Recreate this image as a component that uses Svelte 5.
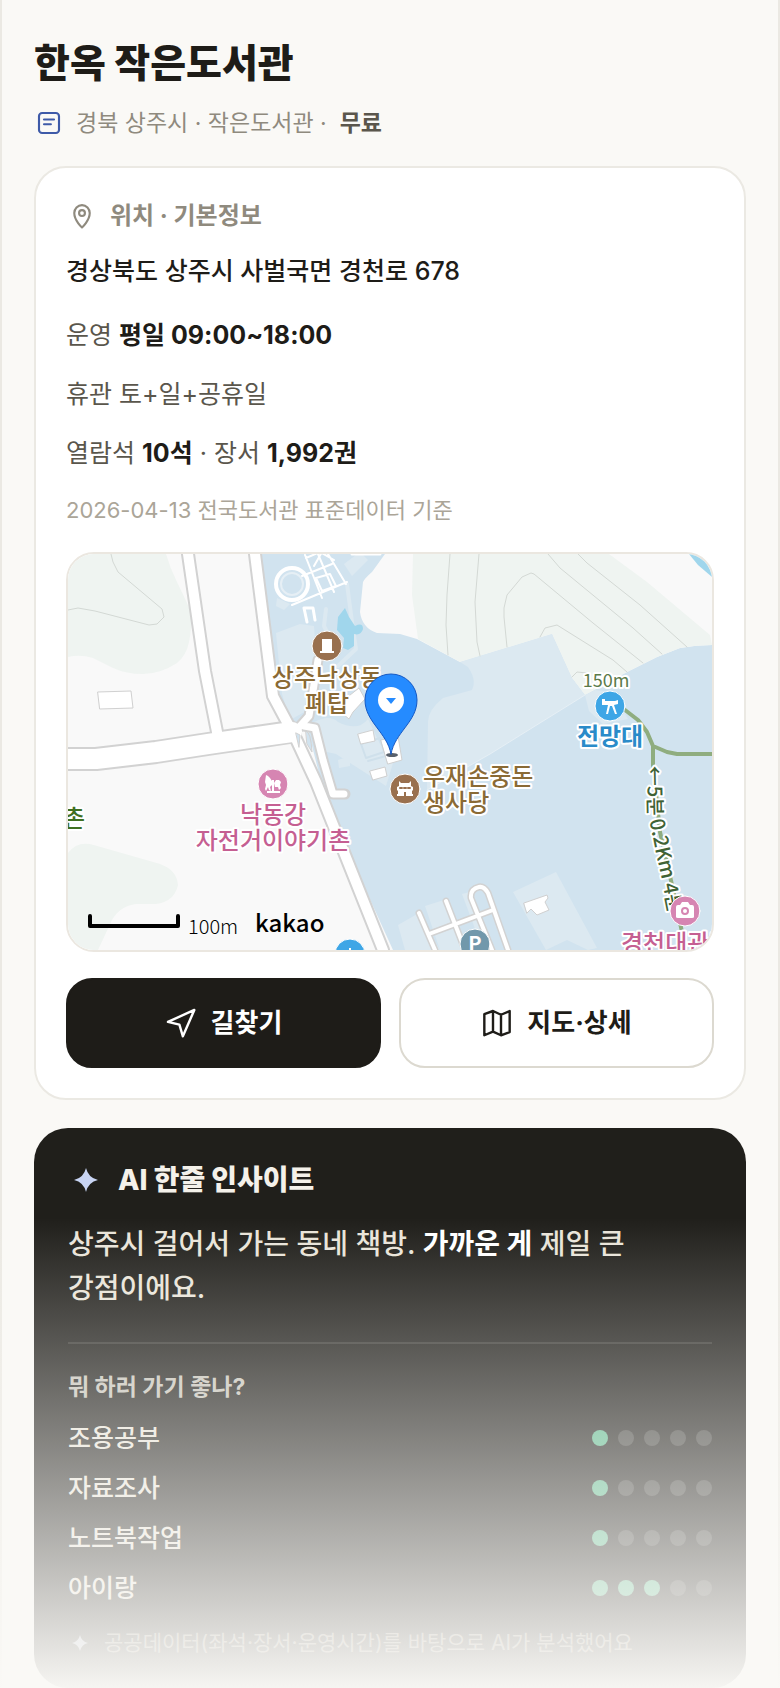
<script lang="ts">
    type Place = {
        x: number;
        y: number;
        color: string;
        lines: string[];
        anchor?: "start" | "middle" | "end";
        bold?: boolean;
    };

    const purposes = [
        { label: "조용공부", score: 1 },
        { label: "자료조사", score: 1 },
        { label: "노트북작업", score: 1 },
        { label: "아이랑", score: 3 },
    ];
    const steps = [1, 2, 3, 4, 5];

    const places: Place[] = [
        { x: 259, y: 132, color: "#8a6a35", lines: ["상주낙상동", "폐탑"] },
        { x: 205, y: 269, color: "#c55f92", lines: ["낙동강", "자전거이야기촌"] },
        { x: 355, y: 231, color: "#8a6a35", lines: ["우재손중돈", "생사당"], anchor: "start" },
        { x: 542, y: 191, color: "#2a8bc9", lines: ["전망대"], bold: true },
        { x: 553, y: 398, color: "#c55f92", lines: ["경천대관광지"], anchor: "start" },
        { x: 17, y: 273, color: "#3f6f1f", lines: ["촌"], anchor: "end" },
    ];

    const contours = [
        "M43 0L45 8L50 18L94 55L96 63L89 70L81 71L27 57L10 54L0 56",
        "M382 0L379 41L378 71L380 101",
        "M411 0L407 48L409 88L412 102",
        "M439 93L436 63L436 54L439 41L454 23L463 19L466 20L525 69L575 109",
        "M480 0L492 14L565 74L594 100",
        "M510 0L519 9L572 51L619 93",
        "M472 83L477 74L489 71L545 106L559 118",
        "M504 123L509 118L519 119",
    ];
</script>

{#snippet sparkle()}
    <path d="M12 4Q13.5 10.5 20 12Q13.5 13.5 12 20Q10.5 13.5 4 12Q10.5 10.5 12 4Z" fill="currentColor" />
{/snippet}

<main class="shell">
    <header>
        <h1>한옥 작은도서관</h1>
        <p class="sub">
            <svg class="kind" viewBox="0 0 24 24" aria-hidden="true">
                <rect x="4" y="4" width="16" height="16" rx="2.5" />
                <path d="M8 9.2h8M8 13h5.5" />
            </svg>
            <span>경북 상주시 · 작은도서관 ·&nbsp; <b>무료</b></span>
        </p>
    </header>

    <section class="card">
        <h2>
            <svg viewBox="0 0 24 24" aria-hidden="true">
                <path d="M12 20.6C12 20.6 6.2 15.4 6.2 9.8a5.8 6 0 0 1 11.6 0C17.8 15.4 12 20.6 12 20.6z" />
                <circle cx="12" cy="9.8" r="2.2" />
            </svg>
            위치 · 기본정보
        </h2>
        <p class="address">경상북도 상주시 사벌국면 경천로 678</p>
        <div class="facts">
            <p>운영 <b>평일 09:00~18:00</b></p>
            <p>휴관 토+일+공휴일</p>
            <p>열람석 <b>10석</b> · 장서 <b>1,992권</b></p>
            <p class="basis">2026-04-13 전국도서관 표준데이터 기준</p>
        </div>

        <div class="map">
            <svg viewBox="0 0 644 396" preserveAspectRatio="xMidYMid slice" role="img" aria-label="지도">
                <rect width="644" height="396" fill="#f9f9f9" />
                <path d="M0 0H98Q102 14 109 28T123 58Q124 74 121 88Q118 102 109 109Q92 120 75 120Q58 120 45 114L25 104Q12 100 0 103Z" fill="#eff4f1" />
                <path d="M0 299Q8 288 22 290L92 310Q109 316 110 331Q106 348 88 350H68Q52 352 44 366L30 396H0Z" fill="#eff4f1" />

                <!-- river, then the hill on its far bank -->
                <path d="M190 0H317L304 18Q297 24 295 28L292 58Q294 74 309 79L332 80L349 85L392 108L484 80L504 124L517 141L559 118L589 103L612 94Q628 91 644 91V396H325L259 251L240 176L210 160Z" fill="#d1e3ef" />
                <path d="M345 0H541L579 28L642 81L644 91Q628 91 612 94L589 103L559 118L517 141L504 124L484 80L392 108L350 85L344 41Z" fill="#eff4f1" />
                <path d="M621 0L630 11L644 23V0Z" fill="#a0d6ec" />
                <path d="M392 108L484 80L504 124L517 141L422 200L359 236L360 168Q360 156 375 144L404 136Q409 126 400 113Z" fill="#dce9f1" />
                <path d="M517 141L422 200L359 236" fill="none" stroke="#e6eff5" />
                <path d="M517 141L521 157L535 170L560 165L544 138L527 136Z" fill="#dce9f1" />
                <path d="M208 79L232 70L246 72L248 100L240 156L222 166L214 140Z" fill="#dce9f1" />
                <path d="M258 55L256 72L262 84L256 98M279 30L284 68L288 95L270 112" fill="none" stroke="#dce9f1" stroke-width="4" />
                <path d="M246 168Q262 160 270 168Q290 178 300 165L312 190L326 206L318 232L268 200L250 196Z" fill="#dce9f1" />
                <path d="M209 44L222 50L216 56L208 52ZM276 10L292 -2L300 6L284 22ZM270 206L282 202V212L271 214Z" fill="#dce9f1" />
                <path d="M293 190L312 184L316 198L298 204ZM300 207L318 202" fill="none" stroke="#cfe0eb" stroke-width="2" />
                <path d="M277 54L281 63L287 72Q295 68 295 75Q293 82 286 80V92L280 96L275 94L276 84L269 76L270 63Z" fill="#a0d6ec" />
                <path d="M330 371L351 359L372 396H337ZM357 352L376 346L397 396H372ZM394 340L402 338L425 390L415 396ZM445 338L488 318L529 394L520 396L499 386L478 396Z" fill="#dce9f1" />

                {#each contours as d}
                    <path {d} fill="none" stroke="#d3d8d4" />
                {/each}

                <g fill="#fff" stroke="#d0d0d0">
                    <path d="M30 138L63 137L65 154L32 155Z" />
                    <path d="M456 349L479 341L480 344L477 348L481 356L469 361L463 355L459 359Z" />
                    <path d="M290 180L305 176L307 187L293 190ZM302 217L317 213L319 222L305 226ZM277 145L291 134L297 145L285 158L281 165L275 160Z" />
                    <path d="M313 186L330 182L334 206L320 210Z" />
                </g>

                <g fill="none" stroke="#d2d2d2">
                    <g stroke-width="14">
                        <path d="M120 0L137 117L151 188" />
                        <path d="M187 0L205 142L228 185L248 228L315 396" />
                    </g>
                    <path d="M-4 205H28L88 198L140 190L222 178" stroke-width="24" />
                    <path d="M250 106L241 162L225 180M236 172L247 174L255 206L265 240L277 240" stroke-width="11" />
                </g>
                <g fill="none" stroke="#fff">
                    <g stroke-width="10">
                        <path d="M120 0L137 117L151 188" />
                        <path d="M187 0L205 142L228 185L248 228L315 396" />
                    </g>
                    <path d="M-4 205H28L88 198L140 190L224 178" stroke-width="20" />
                    <path d="M250 106L241 162L225 180M236 172L247 174L255 206L265 240L276 240" stroke-width="7" />
                </g>
                <path d="M228 179L232 181L231 193ZM238 177Q243 178 244 198L239 190Z" fill="#d1e3ef" stroke="#d2d2d2" />
                <path d="M351 359L367 396M378 347L397 396M361 380L425 356M440 396L420 339Q416 332 411 333Q402 335 403 344L424 396" fill="none" stroke="#d2d2d2" stroke-width="7" />
                <path d="M351 359L367 396M378 347L397 396M361 380L425 356M440 396L420 339Q416 332 411 333Q402 335 403 344L424 396" fill="none" stroke="#fff" stroke-width="4" />

                <!-- amphitheatre and paths of the park -->
                <g fill="none" stroke="#fff" stroke-width="2">
                    <circle cx="224" cy="30" r="16" stroke-width="4" />
                    <circle cx="224" cy="30" r="11" stroke="#e6eff5" />
                    <path d="M224 51L279 28M234 22L264 10M237 1L254 44M250 0L266 38M260 0L278 30M238 4L252 -2L266 6M246 12L254 -2M248 24L262 20L268 32L254 37Z" />
                    <path d="M239 68L236 54H245L247 66M284 0H312" stroke-width="3" />
                </g>

                <path d="M557 156L570 166L579 178L585 192L599 198L609 200H644M585 192V211L592 278L604 331L614 378" fill="none" stroke="#8fad7f" stroke-width="4" />

                <path id="trail" d="M579 212L580 258L587 294L595 331L607 392" fill="none" />
                <text class="halo" font-size="20" font-weight="500" fill="#3f6235">
                    <textPath href="#trail">←5분 0.2Km 4분</textPath>
                </text>

                <g stroke="#fff" stroke-width="1">
                    <circle cx="259" cy="92" r="15" fill="#99704e" />
                    <circle cx="337" cy="235" r="15" fill="#99704e" />
                    <circle cx="542" cy="152" r="15" fill="#3ea6e6" />
                    <circle cx="282" cy="400" r="15" fill="#3ea6e6" />
                    <circle cx="205" cy="230" r="15" fill="#d685b2" />
                    <circle cx="617" cy="357" r="15" fill="#d685b2" />
                    <circle cx="407" cy="390" r="15" fill="#7198ab" />
                </g>
                <g fill="#fff">
                    <path d="M254 85H264V97H266V99H252V97H254Z" />
                    <path d="M331 227L333 229H341L343 227V232L345 233V236L344 237V240H345V242H329V240H330V237L329 236V233L331 232Z" />
                    <path d="M534 145H537V147H547L550 146V150L546 151L549 160H547L544 152H542L540 160H538L540 151H534Z" />
                    <path d="M198 221L200 222L202 224L204 227V231L202 233L203 237L201 236L200 233L198 237L197 235L198 231L197 228ZM206 229L208 226H211L213 228L212 231L213 234L211 236L210 233L207 233ZM204 226H206V237H212V239H199V237H204Z" />
                    <path d="M608 353Q608 351 610 351H612L614 348H620L622 351H624Q626 351 626 353V363Q626 364 624 364H610Q608 364 608 363Z" />
                    <path d="M281 394H283V396H281Z" />
                </g>
                <path d="M332 234h2m2 0h2m2 0h2" stroke="#99704e" stroke-width="2" />
                <path d="M336 242V238H338V242" fill="#99704e" />
                <circle cx="617" cy="357" r="3" fill="none" stroke="#d685b2" stroke-width="2" />
                <text x="407" y="397" font-size="20" font-weight="700" fill="#fff" text-anchor="middle">P</text>

                {#each places as place}
                    <g class="halo" font-size="24" font-weight={place.bold ? 700 : 500} fill={place.color} text-anchor={place.anchor ?? "middle"}>
                        {#each place.lines as line, i}
                            <text x={place.x} y={place.y + i * 26}>{line}</text>
                        {/each}
                    </g>
                {/each}
                <text class="halo" x="538" y="133" font-size="18" fill="#5b7a4a" text-anchor="middle">150m</text>

                <ellipse cx="324" cy="201" rx="6" ry="2" fill="#59616b" />
                <path d="M323 200C319 178 297 168 297 146A26 26 0 0 1 349 146C349 168 327 178 323 200Z" fill="#258bff" stroke="#1559c4" />
                <circle cx="323" cy="146" r="13" fill="#fff" />
                <path d="M318 144H328L323 150Z" fill="#258bff" />

                <path d="M22 362V372H110V362" fill="none" stroke="#000" stroke-width="4" />
                <text x="120" y="380" font-size="20" font-weight="300">100m</text>
                <text x="187" y="378" font-size="24" font-weight="500">kakao</text>
            </svg>
        </div>

        <div class="actions">
            <button type="button" class="primary">
                <svg viewBox="0 0 24 24" aria-hidden="true"><path d="M2.2 11.2L22 2.2L13.4 22L10.8 13.2Z" /></svg>
                길찾기
            </button>
            <button type="button">
                <svg viewBox="0 0 24 24" aria-hidden="true"><path d="M2.5 5.3L9 3l6 2.8L21.5 3v15.8L15 21.2L9 18.5L2.5 21.2zM9 3v15.5M15 5.8v15.4" /></svg>
                지도·상세
            </button>
        </div>
    </section>

    <section class="insight">
        <h2>
            <svg viewBox="0 0 24 24" aria-hidden="true">{@render sparkle()}</svg>
            AI 한줄 인사이트
        </h2>
        <p class="summary">상주시 걸어서 가는 동네 책방. <b>가까운 게</b> 제일 큰 강점이에요.</p>
        <h3>뭐 하러 가기 좋나?</h3>
        <ul>
            {#each purposes as p}
                <li>
                    {p.label}
                    <span class="dots" role="img" aria-label="5점 중 {p.score}점">
                        {#each steps as n}<i class:on={n <= p.score}></i>{/each}
                    </span>
                </li>
            {/each}
        </ul>
        <p class="source">
            <svg viewBox="0 0 24 24" aria-hidden="true">{@render sparkle()}</svg>
            공공데이터(좌석·장서·운영시간)를 바탕으로 AI가 분석했어요
        </p>
    </section>

    <div class="fade"></div>
</main>

<style>
    :global(body) {
        background: #faf9f6;
    }

    .shell {
        position: relative;
        box-sizing: border-box;
        padding: 39px 32px 0;
        border: solid #ebe9e3;
        border-width: 0 2px;
        background: #faf9f6;
        color: #1e1c18;
        font-family: Inter, "Noto Sans CJK KR", sans-serif;
        font-weight: 500;
        line-height: 36px;
        word-break: keep-all;
    }

    h1, h2, h3, p, ul {
        margin: 0;
        padding: 0;
    }

    svg {
        flex: none;
        fill: none;
        stroke: currentColor;
        stroke-width: 2;
        stroke-linecap: round;
        stroke-linejoin: round;
    }

    h1 {
        font-size: 39px;
        line-height: 48px;
        font-weight: 800;
    }

    .sub {
        display: flex;
        align-items: center;
        gap: 12px;
        margin: 18px 0 25px;
        font-size: 23px;
        font-weight: 400;
        color: #8f8a7e;
    }

    .sub b {
        color: #5a564c;
        font-weight: 700;
    }

    .kind {
        width: 30px;
        height: 30px;
        color: #3e5aa8;
        stroke-width: 1.7;
    }

    .card {
        padding: 30px 30px 30px;
        border: 2px solid #ebe9e3;
        border-radius: 32px;
        background: #fff;
    }

    h2 {
        display: flex;
        align-items: center;
        font-weight: 700;
    }

    .card h2 {
        gap: 12px;
        margin-bottom: 19px;
        font-size: 24px;
        color: #8f8a7e;
    }

    .card h2 svg {
        width: 32px;
        height: 32px;
        stroke-width: 1.6;
    }

    .address {
        margin-bottom: 28px;
        font-size: 25px;
    }

    .facts {
        display: grid;
        gap: 23px;
        margin-bottom: 26px;
        font-size: 25px;
        font-weight: 400;
        color: #5a564c;
    }

    .facts b {
        color: #1e1c18;
        font-weight: 700;
    }

    .facts .basis {
        font-size: 22px;
        line-height: 32px;
        color: #aba598;
    }

    .map {
        overflow: hidden;
        border: 2px solid #ebe7e0;
        border-radius: 28px;
    }

    .map svg {
        display: block;
        width: 100%;
        fill: #000;
        stroke: none;
        stroke-width: 1;
    }

    .map text {
        font-family: "Noto Sans CJK KR", sans-serif;
    }

    .map text:not([font-weight]):not(g > text) {
        font-weight: 400;
    }

    .halo {
        paint-order: stroke;
        stroke: #fff;
        stroke-width: 4px;
    }

    .actions {
        display: grid;
        grid-template-columns: 1fr 1fr;
        gap: 18px;
        margin-top: 26px;
    }

    button {
        display: flex;
        align-items: center;
        justify-content: center;
        gap: 14px;
        height: 90px;
        border: 2px solid #dcd9d0;
        border-radius: 26px;
        background: #fff;
        color: #1e1c18;
        font: inherit;
        font-size: 26px;
        font-weight: 700;
        cursor: pointer;
    }

    button svg {
        width: 32px;
        height: 32px;
        stroke-width: 1.8;
    }

    button.primary {
        border-color: #1e1c18;
        background: #1e1c18;
        color: #fff;
    }

    .insight {
        margin-top: 28px;
        padding: 34px 34px 29px;
        border-radius: 34px;
        background: #201f1b;
        color: #e9e4d9;
    }

    .insight h2 {
        gap: 14px;
        font-size: 28px;
        font-weight: 800;
        color: #f4f1ea;
    }

    .insight svg {
        stroke: none;
    }

    .insight h2 svg {
        width: 36px;
        height: 36px;
        color: #c8d4f3;
    }

    .summary {
        margin-top: 24px;
        padding-bottom: 32px;
        border-bottom: 2px solid #383733;
        font-size: 28px;
        line-height: 44px;
    }

    .summary b {
        color: #fff;
        font-weight: 700;
    }

    h3 {
        margin: 27px 0 10px;
        font-size: 23px;
        line-height: 32px;
        font-weight: 700;
        color: #c5c2b8;
    }

    li {
        display: flex;
        align-items: center;
        justify-content: space-between;
        height: 50px;
        font-size: 25px;
    }

    .dots {
        display: flex;
        gap: 10px;
    }

    .dots i {
        width: 16px;
        height: 16px;
        border-radius: 50%;
        background: rgba(255, 255, 255, .16);
    }

    .dots i.on {
        background: #5cb88c;
    }

    .source {
        display: flex;
        align-items: center;
        gap: 12px;
        margin-top: 14px;
        font-size: 21px;
        line-height: 32px;
        font-weight: 400;
        color: #8f8a7e;
    }

    .source svg {
        width: 24px;
        height: 24px;
        color: #aab2c6;
    }

    /* preview ends by dissolving into the page */
    .fade {
        position: absolute;
        inset: auto -2px 0;
        height: 470px;
        background: linear-gradient(rgba(250, 249, 246, 0), rgba(250, 249, 246, .98));
        pointer-events: none;
    }
</style>
